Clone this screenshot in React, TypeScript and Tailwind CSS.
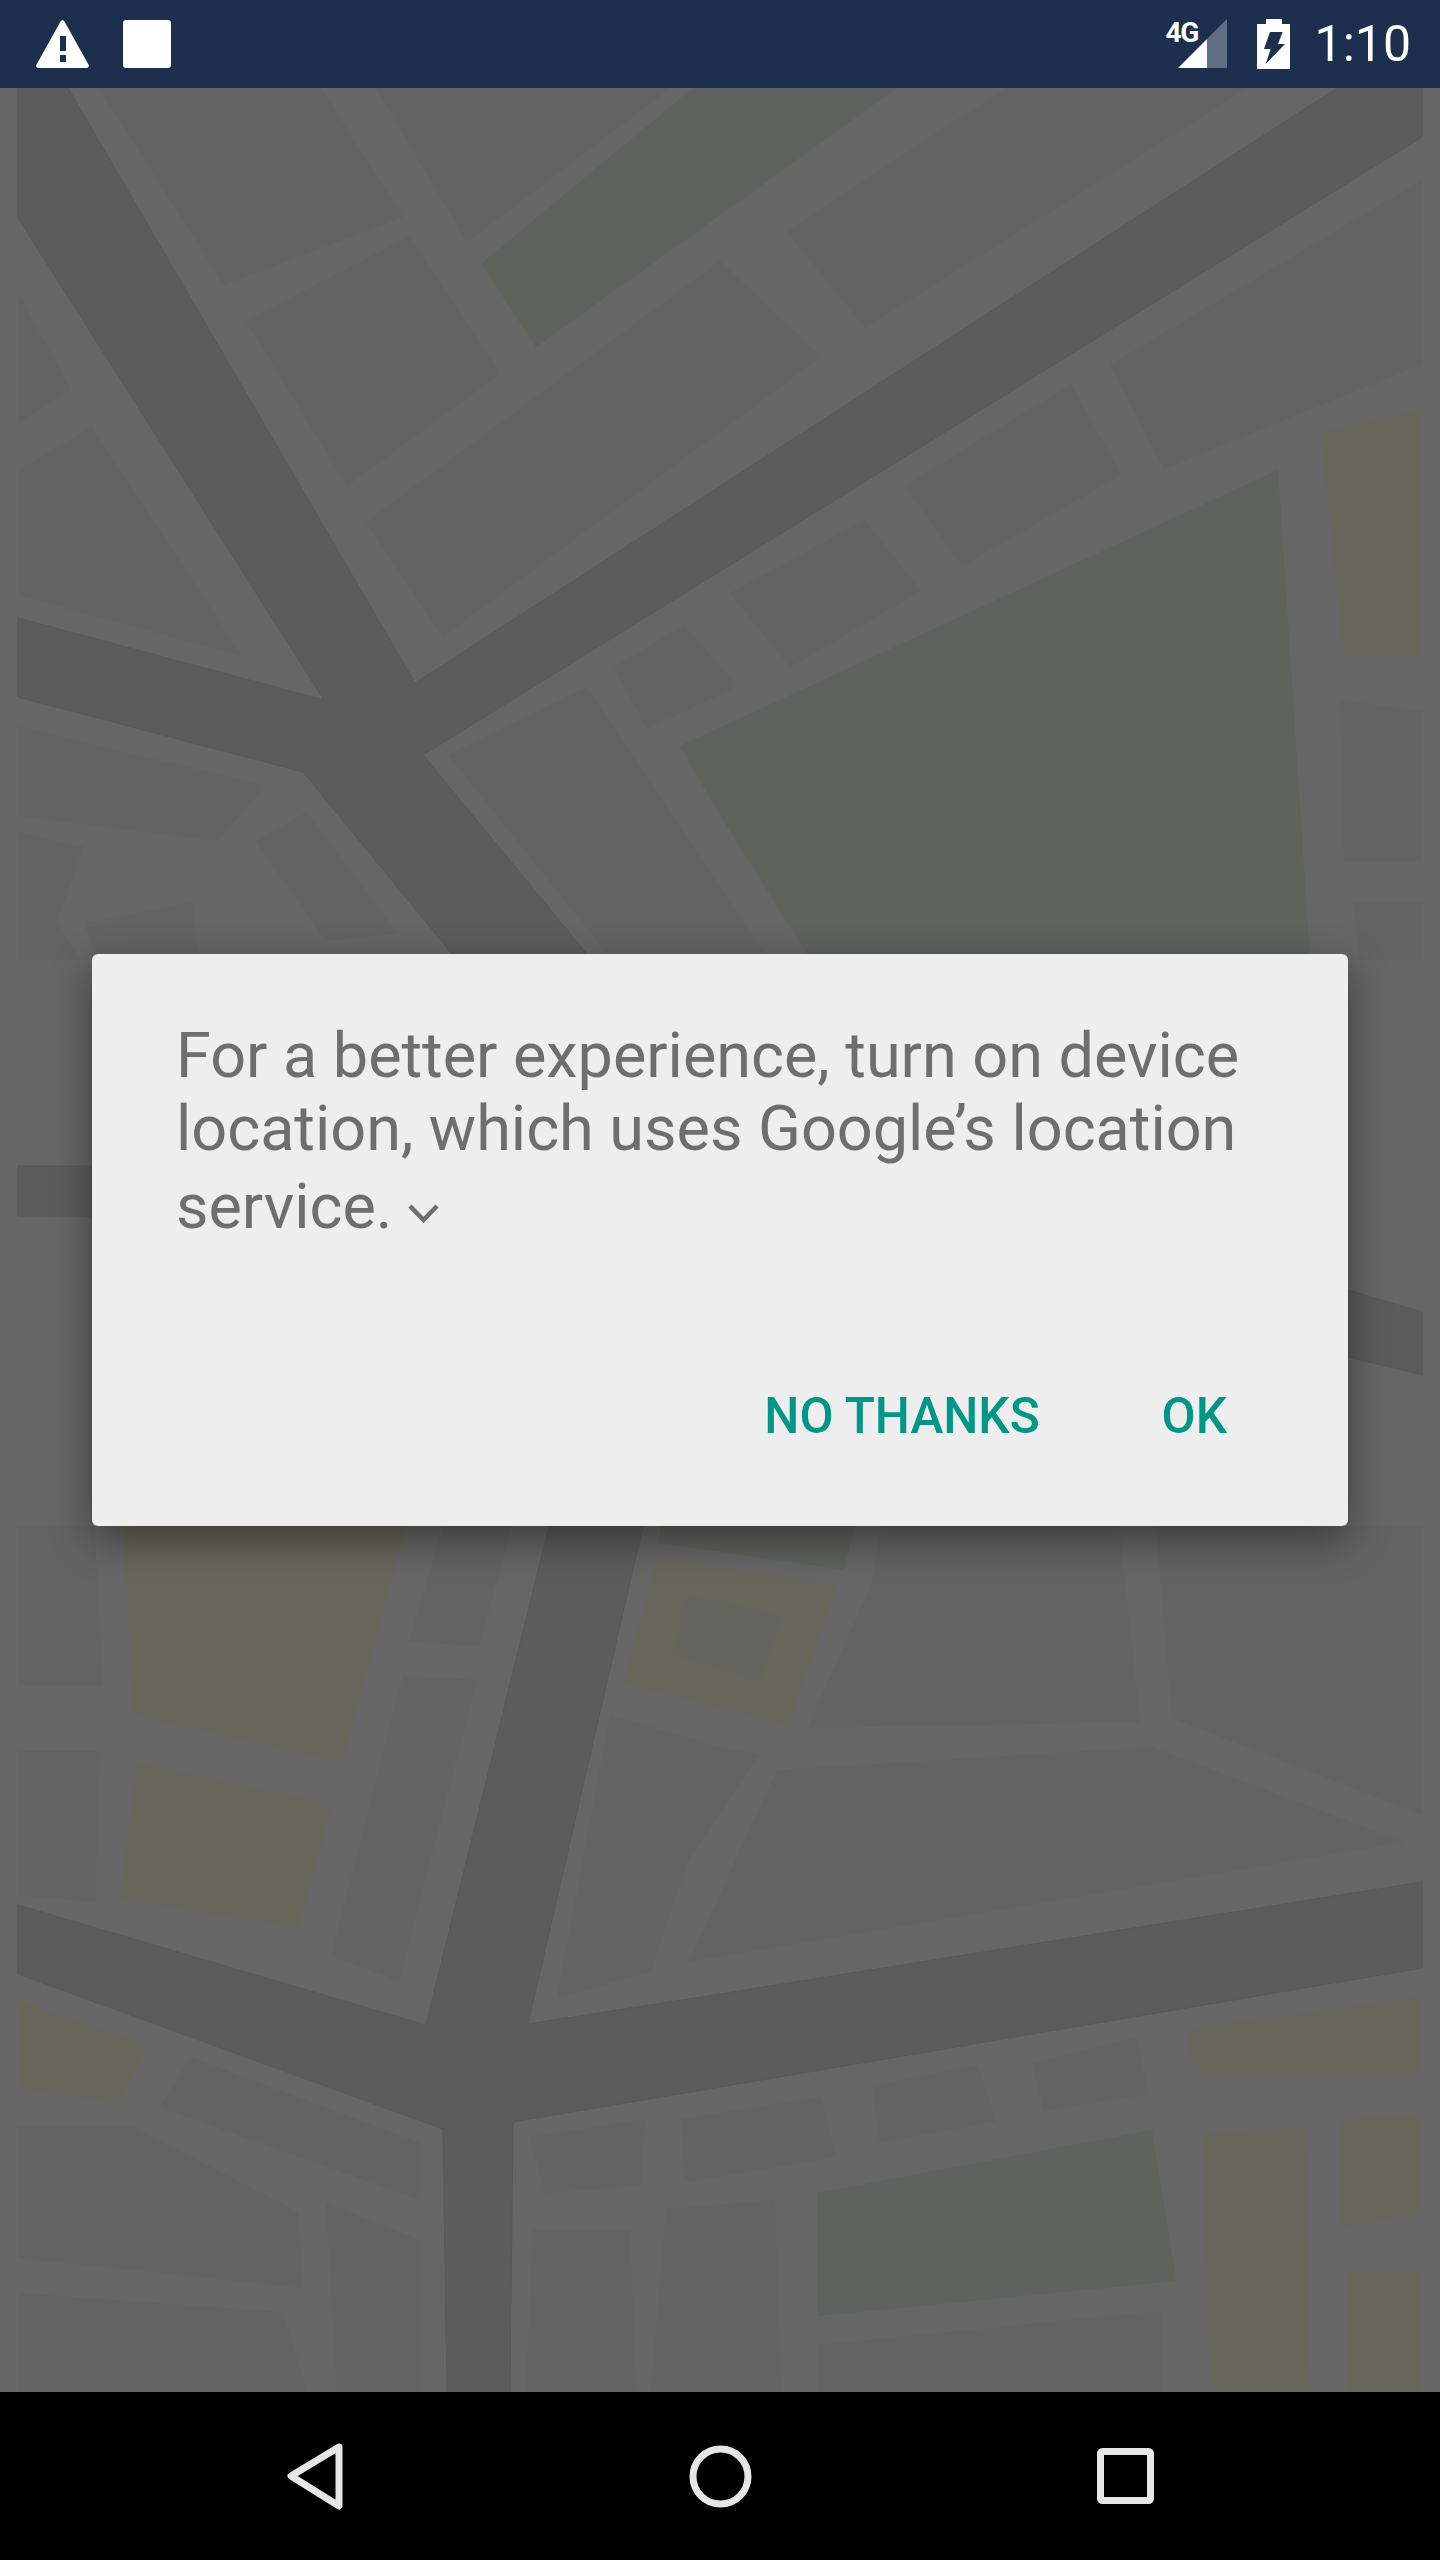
import React from "react";

const BLOCK = "#636363";
const GREEN = "#60625d";
const YELLOW = "#67665b";
const ROAD = "#5c5c5c";

// map shapes, in page coordinates
const blocks: string[] = [
  "99,88 321,88 403,217 224,285",
  "376,88 670,88 467,242",
  "410,236 500,374 347,486 246,321",
  "366,522 720,261 821,357 443,637",
  "787,232 1005,88 1248,88 865,328",
  "1110,365 1422,180 1422,364 1164,469",
  "905,486 1071,384 1121,475 962,566",
  "730,593 865,520 921,591 790,667",
  "1340,700 1422,711 1422,861 1344,861",
  "1353,902 1422,902 1422,960 1360,960",
  "614,667 684,625 738,686 647,729",
  "448,755 587,687 770,960 612,960",
  "18,292 71,390 18,424",
  "18,470 92,427 242,656 18,595",
  "18,726 266,786 217,841 18,816",
  "18,832 84,847 57,921 80,960 18,960",
  "85,923 193,902 198,960 96,960",
  "256,841 307,812 398,934 325,941",
  "18,1526 94,1526 103,1685 18,1685",
  "443,1526 512,1526 479,1646 409,1642",
  "403,1676 477,1680 399,1981 331,1956",
  "18,1751 100,1751 95,1902 18,1895",
  "610,1715 720,1747 759,1754 720,1813 689,1859 650,1972 557,1998",
  "777,1770 1152,1747 1404,1842 689,1962",
  "881,1526 1119,1526 1140,1722 807,1728 871,1586",
  "1156,1526 1422,1526 1422,1815 1172,1718",
  "191,2057 420,2143 420,2200 159,2107",
  "18,2126 131,2126 298,2212 303,2288 18,2258",
  "326,2203 420,2240 420,2392 337,2392",
  "18,2293 282,2312 308,2392 18,2392",
  "530,2137 645,2119 640,2186 545,2193",
  "681,2119 821,2097 836,2157 685,2182",
  "533,2230 630,2230 636,2392 526,2392",
  "666,2209 775,2200 781,2392 651,2392",
  "872,2086 977,2065 996,2121 880,2143",
  "1032,2064 1137,2037 1148,2094 1044,2111",
  "817,2345 1161,2311 1161,2392 817,2392",
];

const greens: string[] = [
  "693,88 897,88 536,347 481,264",
  "680,746 1278,470 1310,960 811,960 720,815",
  "661,1526 855,1526 844,1570 659,1543",
  "817,2193 1152,2130 1176,2281 817,2316",
];

const yellows: string[] = [
  "1321,432 1422,409 1422,656 1344,656",
  "124,1526 406,1526 342,1762 132,1715",
  "137,1763 332,1804 298,1928 120,1899",
  "659,1555 837,1586 788,1725 623,1683",
  "18,2000 149,2045 119,2103 18,2088",
  "1186,2029 1422,1997 1422,2073 1195,2073",
  "1203,2134 1305,2127 1310,2392 1210,2392",
  "1341,2119 1422,2116 1422,2211 1341,2229",
  "1347,2270 1422,2270 1422,2392 1347,2392",
];

const roads: string[] = [
  "18,88 68,88 415,683 1337,88 1422,88 1422,137 423,755 592,960 457,960 303,772 18,697 18,618 324,700 18,218",
  "549,1526 643,1526 528,2024 720,1994 1422,1882 1422,1968 720,2087 513,2122 510,2392 447,2392 443,2129 18,1974 18,1905 426,2025",
  "18,1166 92,1166 92,1216 18,1216",
  "1348,1290 1422,1312 1422,1375 1348,1357",
];

const MapBackground = () => (
  <svg className="absolute inset-0 w-full h-full" viewBox="0 88 1440 2304">
    {blocks.map((points) => (
      <polygon key={points} points={points} fill={BLOCK} />
    ))}
    {greens.map((points) => (
      <polygon key={points} points={points} fill={GREEN} />
    ))}
    {yellows.map((points) => (
      <polygon key={points} points={points} fill={YELLOW} />
    ))}
    <polygon points="686,1595 783,1615 760,1681 673,1654" fill="#64655d" />
    {roads.map((points) => (
      <polygon key={points} points={points} fill={ROAD} stroke="#595959" strokeWidth="1" />
    ))}
  </svg>
);

const StatusBar = () => (
  <header className="h-[88px] bg-[#1c2f4f] flex items-center justify-between shrink-0 relative">
    <div className="flex items-center">
      <svg className="ml-[36px] w-[53px] h-[48px]" viewBox="0 0 53 48">
        <path
          fillRule="evenodd"
          fill="#fff"
          d="M26.5 0 Q27.5 0 28.5 1.5 L52.7 45 Q53.5 47.5 51 48 L2 48 Q-0.5 47.5 0.3 45 L24.5 1.5 Q25.5 0 26.5 0 Z M24 16 L24 31 L30 31 L30 16 Z M24 35 L24 42 L30 42 L30 35 Z"
        />
      </svg>
      <div className="ml-[34px] w-[48px] h-[48px] bg-white rounded-[3px]" />
    </div>
    <div className="flex items-center mr-[29px]">
      <div className="relative w-[62px] h-[50px]">
        <span className="absolute left-0 top-[-2px] font-['Roboto',sans-serif] font-bold text-[28px] leading-[32px] text-white tracking-[-1.5px]">
          4G
        </span>
        <svg className="absolute left-0 top-0 w-[62px] h-[50px]" viewBox="0 0 62 50">
          <polygon points="12,49 41,49 41,20" fill="#fff" />
          <polygon points="41,20 61,0 61,49 41,49" fill="#616f84" />
        </svg>
      </div>
      <svg className="ml-[29px] w-[33px] h-[50px]" viewBox="0 0 33 50">
        <path
          fillRule="evenodd"
          fill="#fff"
          d="M9 0 H25 V5 H33 V50 H0 V5 H9 Z M13 13 H25.7 L21 25 H28 L8.7 45 L13.7 30 H7 Z"
        />
      </svg>
      <span className="ml-[25px] font-['Roboto',sans-serif] text-[50px] leading-none text-white">1:10</span>
    </div>
  </header>
);

const NavBar = () => (
  <footer className="h-[168px] bg-black flex shrink-0 relative">
    <svg className="w-full h-full" viewBox="0 2392 1440 168">
      <path
        d="M339 2447 L291 2476 L339 2506 Z"
        fill="none"
        stroke="#e6e6e6"
        strokeWidth="7"
        strokeLinejoin="round"
      />
      <circle cx="720.5" cy="2476.5" r="27.5" fill="none" stroke="#e6e6e6" strokeWidth="7" />
      <rect x="1100.5" y="2451.5" width="50" height="49" rx="2" fill="none" stroke="#e6e6e6" strokeWidth="7" />
    </svg>
  </footer>
);

const App: React.FC = () => {
  return (
    <div className="w-[1440px] h-[2560px] flex flex-col overflow-hidden bg-[#666666] font-['Roboto',sans-serif]">
      <StatusBar />
      <main className="relative flex-1 flex flex-col">
        <MapBackground />
        <section className="relative mt-[866px] mx-[92px] h-[572px] bg-[#eeeeee] rounded-[6px] shadow-[0_14px_40px_rgba(0,0,0,0.42)]">
          <div className="pl-[84px] pt-[65px] text-[63px] leading-[73px] tracking-[-0.03px] text-[#6e6e6e] whitespace-nowrap">
            <p>For a better experience, turn on device</p>
            <p>location, which uses Google’s location</p>
            <p className="mt-[5px] flex items-center">
              service.
              <svg className="ml-[16px] mt-[14px] w-[31px] h-[19px]" viewBox="0 0 31 19">
                <path d="M2 2 L15.5 16 L29 2" fill="none" stroke="#6e6e6e" strokeWidth="4.5" />
              </svg>
            </p>
          </div>
          <div className="absolute right-0 top-[433px] flex font-medium text-[49.5px] leading-[58px] text-[#009688]">
            <button className="mr-[122px]">NO THANKS</button>
            <button className="mr-[121px]">OK</button>
          </div>
        </section>
      </main>
      <NavBar />
    </div>
  );
};

export default App;
